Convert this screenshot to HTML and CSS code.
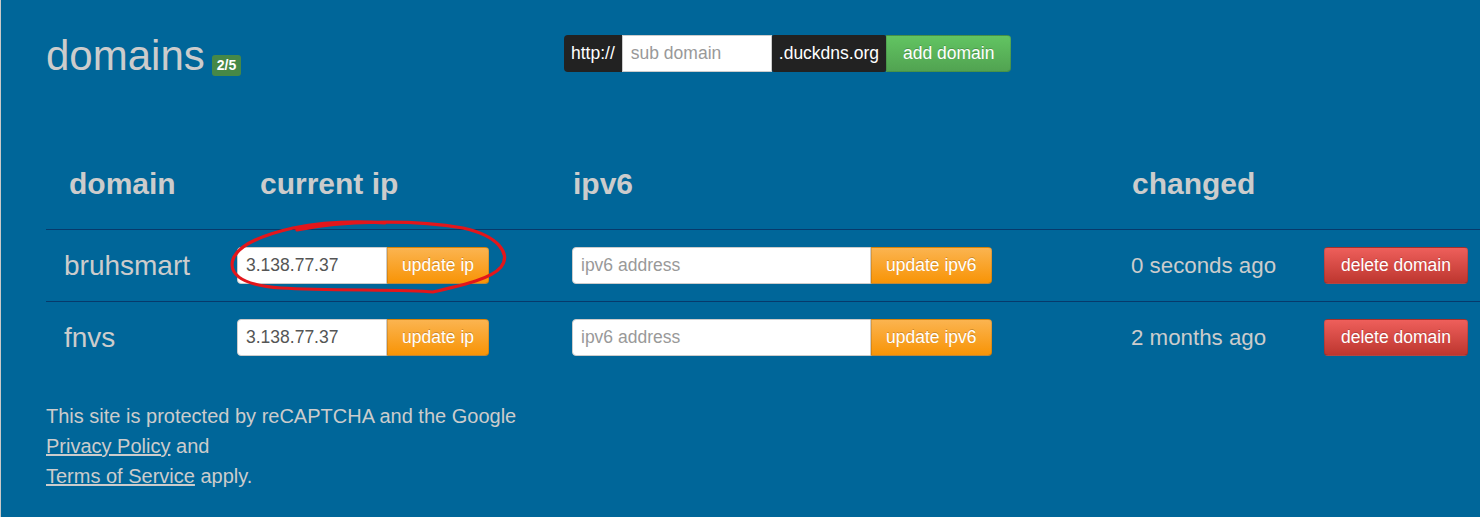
FILE: index.html
```html
<!DOCTYPE html>
<html>
<head>
<meta charset="utf-8">
<title>domains</title>
<link rel="stylesheet" href="styles.css">
</head>
<body>
<div class="page">
  <div class="top">
    <h1 class="title">domains<span class="badge">2/5</span></h1>
    <div class="add-group">
      <span class="addon addon-first">http://</span>
      <input class="field sub-field" type="text" placeholder="sub domain">
      <span class="addon addon-mid">.duckdns.org</span>
      <button class="btn btn-success btn-add">add domain</button>
    </div>
  </div>

  <div class="domains">
    <div class="row head">
      <div class="th th-domain">domain</div>
      <div class="th th-ip">current ip</div>
      <div class="th th-v6">ipv6</div>
      <div class="th th-changed">changed</div>
      <div class="th"></div>
    </div>

    <div class="row item">
      <div class="cell cell-domain">bruhsmart</div>
      <div class="cell cell-ip">
        <div class="group">
          <input class="field ip-field" type="text" value="3.138.77.37">
          <button class="btn btn-warning btn-end btn-ip">update ip</button>
        </div>
      </div>
      <div class="cell cell-v6">
        <div class="group">
          <input class="field v6-field" type="text" placeholder="ipv6 address">
          <button class="btn btn-warning btn-end btn-v6">update ipv6</button>
        </div>
      </div>
      <div class="cell cell-changed">0 seconds ago</div>
      <div class="cell cell-del"><button class="btn btn-danger btn-del">delete domain</button></div>
    </div>

    <div class="row item">
      <div class="cell cell-domain">fnvs</div>
      <div class="cell cell-ip">
        <div class="group">
          <input class="field ip-field" type="text" value="3.138.77.37">
          <button class="btn btn-warning btn-end btn-ip">update ip</button>
        </div>
      </div>
      <div class="cell cell-v6">
        <div class="group">
          <input class="field v6-field" type="text" placeholder="ipv6 address">
          <button class="btn btn-warning btn-end btn-v6">update ipv6</button>
        </div>
      </div>
      <div class="cell cell-changed">2 months ago</div>
      <div class="cell cell-del"><button class="btn btn-danger btn-del">delete domain</button></div>
    </div>
  </div>

  <p class="legal">This site is protected by reCAPTCHA and the Google<br><a href="#">Privacy Policy</a> and<br><a href="#">Terms of Service</a> apply.</p>

  <svg class="annotation" width="1480" height="517" viewBox="0 0 1480 517">
    <path d="M 296 230 C 340 221, 410 219, 462 228 C 498 236, 510 254, 500 267 C 490 279, 462 285, 432 292 C 405 289, 330 291, 280 288 C 250 286, 232 279, 231 265 C 231 250, 252 237, 292 228 C 322 222, 356 221, 384 223" fill="none" stroke="#e3161b" stroke-width="3.2" stroke-linecap="round" stroke-linejoin="round"/>
  </svg>
</div>
</body>
</html>
```

FILE: styles.css
```css
html, body {
  margin: 0;
  padding: 0;
}

body {
  background: #006699;
  color: #cccccc;
  font-family: "Liberation Sans", Arial, sans-serif;
  overflow: hidden;
}

.page {
  position: relative;
  box-sizing: border-box;
  min-height: 517px;
  border-left: 1px solid #c9c9c9;
  padding-left: 45px;
}

.top {
  display: grid;
  grid-template-columns: 518px auto;
  align-items: start;
  height: 120px;
}

.title {
  margin: 33px 0 0;
  font-size: 42px;
  font-weight: normal;
  line-height: 46px;
  color: #cccccc;
}

.badge {
  display: inline-block;
  margin-left: 7px;
  padding: 2px 5px;
  font-size: 14px;
  line-height: 17px;
  font-weight: bold;
  color: #ffffff;
  background: #468847;
  border-radius: 3px;
  vertical-align: baseline;
}

.add-group {
  display: flex;
  margin-top: 35px;
  height: 37px;
}

.addon {
  box-sizing: border-box;
  height: 37px;
  padding: 0 7px;
  background: #222222;
  color: #ffffff;
  font-size: 17.5px;
  line-height: 37px;
}

.addon-first {
  border-radius: 4px 0 0 4px;
}

.addon-mid {
  border-radius: 2px;
}

.field {
  box-sizing: border-box;
  height: 37px;
  margin: 0;
  padding: 0 8px;
  border: 1px solid #cccccc;
  background: #ffffff;
  color: #555555;
  font-family: "Liberation Sans", Arial, sans-serif;
  font-size: 17.5px;
  outline: none;
}

.field::placeholder {
  color: #999999;
}

.sub-field {
  width: 150px;
  border-radius: 0;
}

.btn {
  box-sizing: border-box;
  height: 37px;
  margin: 0;
  border: 1px solid rgba(0, 0, 0, 0.12);
  border-bottom-color: rgba(0, 0, 0, 0.25);
  border-radius: 4px;
  color: #ffffff;
  font-family: "Liberation Sans", Arial, sans-serif;
  font-size: 17.5px;
  line-height: 35px;
  text-shadow: 0 -1px 0 rgba(0, 0, 0, 0.2);
  cursor: pointer;
}

.btn-success {
  background: linear-gradient(#62c462, #51a351);
}

.btn-warning {
  background: linear-gradient(#fbb450, #f89406);
}

.btn-danger {
  background: linear-gradient(#ee5f5b, #bd362f);
}

.btn-add {
  padding: 0 16px;
  border-radius: 0 4px 4px 0;
}

.btn-end {
  border-radius: 0 4px 4px 0;
}

.btn-ip {
  padding: 0 14px;
}

.btn-v6 {
  padding: 0 14px;
}

.btn-del {
  padding: 0 16px;
}

.domains {
  width: 100%;
}

.row {
  display: grid;
  grid-template-columns: 183px 335px 559px 193px 1fr;
}

.head {
  align-items: end;
}

.th {
  padding: 46px 0 27px;
  font-size: 30px;
  line-height: 36px;
  font-weight: bold;
  color: #cccccc;
}

.th-domain { padding-left: 23px; }
.th-ip { padding-left: 31px; }
.th-v6 { padding-left: 9px; }
.th-changed { padding-left: 9px; }

.item {
  box-sizing: border-box;
  height: 72px;
  border-top: 1px solid #073a6b;
  align-items: center;
}

.cell {
  padding-left: 8px;
}

.cell-domain {
  padding-left: 18px;
  font-size: 28px;
}

.cell-changed {
  font-size: 22.3px;
}

.group {
  display: flex;
}

.ip-field {
  width: 150px;
  border-radius: 4px 0 0 4px;
}

.v6-field {
  width: 299px;
  border-radius: 4px 0 0 4px;
}

.legal {
  margin: 28px 0 0;
  font-size: 20px;
  line-height: 30px;
  color: #cccccc;
}

.legal a {
  color: #cccccc;
  text-decoration: underline;
}

.annotation {
  position: absolute;
  left: 0;
  top: 0;
  pointer-events: none;
}
```
